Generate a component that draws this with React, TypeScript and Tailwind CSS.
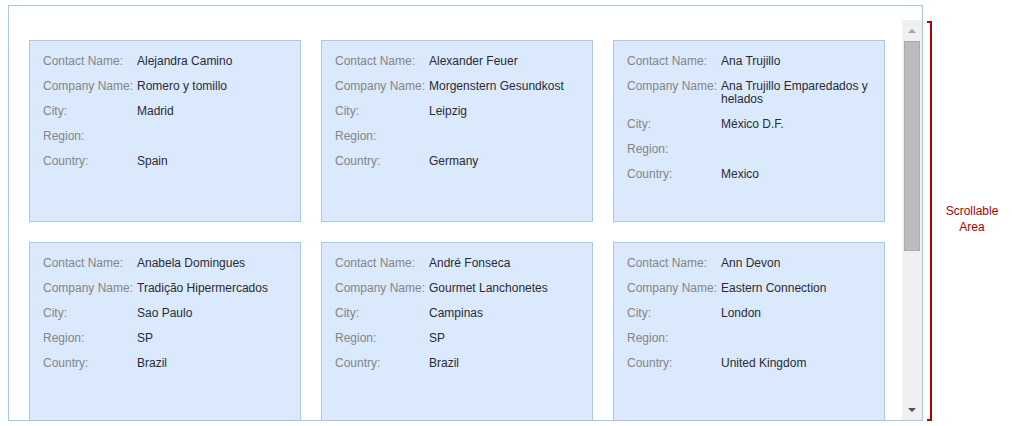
import React from "react";

type Customer = {
  contact: string;
  company: string;
  city: string;
  region: string;
  country: string;
};

const customers: Customer[] = [
  { contact: "Alejandra Camino", company: "Romero y tomillo", city: "Madrid", region: "", country: "Spain" },
  { contact: "Alexander Feuer", company: "Morgenstern Gesundkost", city: "Leipzig", region: "", country: "Germany" },
  { contact: "Ana Trujillo", company: "Ana Trujillo Emparedados y helados", city: "México D.F.", region: "", country: "Mexico" },
  { contact: "Anabela Domingues", company: "Tradição Hipermercados", city: "Sao Paulo", region: "SP", country: "Brazil" },
  { contact: "André Fonseca", company: "Gourmet Lanchonetes", city: "Campinas", region: "SP", country: "Brazil" },
  { contact: "Ann Devon", company: "Eastern Connection", city: "London", region: "", country: "United Kingdom" },
];

function Row({ label, value }: { label: string; value: string }) {
  return (
    <div className="flex leading-[13px] mb-[12px]">
      <div className="w-[94px] shrink-0 text-[#858585]">{label}</div>
      <div className="flex-1 text-[#2a2a36]">{value}</div>
    </div>
  );
}

function CustomerCard({ c }: { c: Customer }) {
  return (
    <div className="h-[182px] bg-[#dae9fc] border border-[#a9c6ec] pl-[13px] pr-3 pt-[14px]">
      <Row label="Contact Name:" value={c.contact} />
      <Row label="Company Name:" value={c.company} />
      <Row label="City:" value={c.city} />
      <Row label="Region:" value={c.region} />
      <Row label="Country:" value={c.country} />
    </div>
  );
}

function Scrollbar() {
  return (
    <div className="w-[20px] shrink-0 bg-[#f0f0f0] flex flex-col">
      <div className="h-[21px] flex items-center justify-center">
        <div className="w-0 h-0 border-l-4 border-r-4 border-b-4 border-l-transparent border-r-transparent border-b-[#a3a3a3]" />
      </div>
      <div className="mx-[2px] h-[210px] bg-[#bcbcbc] border border-[#ababab]" />
      <div className="flex-1" />
      <div className="h-[20px] flex items-center justify-center">
        <div className="w-0 h-0 border-l-4 border-r-4 border-t-4 border-l-transparent border-r-transparent border-t-[#505050]" />
      </div>
    </div>
  );
}

export default function App() {
  return (
    <div className="w-[1012px] h-[426px] bg-white flex pt-[5px] pl-2 text-[12px] font-['Liberation_Sans',Arial,sans-serif]">
      {/* List box */}
      <div className="w-[920px] h-[416px] border border-[#a8c4ea] pt-[14px] flex">
        <div className="flex-1 overflow-hidden pt-5 pl-5">
          <div className="grid grid-cols-[repeat(3,272px)] gap-5">
            {customers.map((c) => (
              <CustomerCard key={c.contact} c={c} />
            ))}
          </div>
        </div>
        <Scrollbar />
      </div>

      {/* Bracket + caption */}
      <div className="flex items-center h-[400px] mt-4">
        <div className="ml-[4px] w-[5px] h-[400px] border-t-2 border-b-2 border-r-2 border-[#b00000]" />
        <div className="w-[80px] text-center leading-4 text-[#b00000] -mt-1">
          Scrollable
          <br />
          Area
        </div>
      </div>
    </div>
  );
}
